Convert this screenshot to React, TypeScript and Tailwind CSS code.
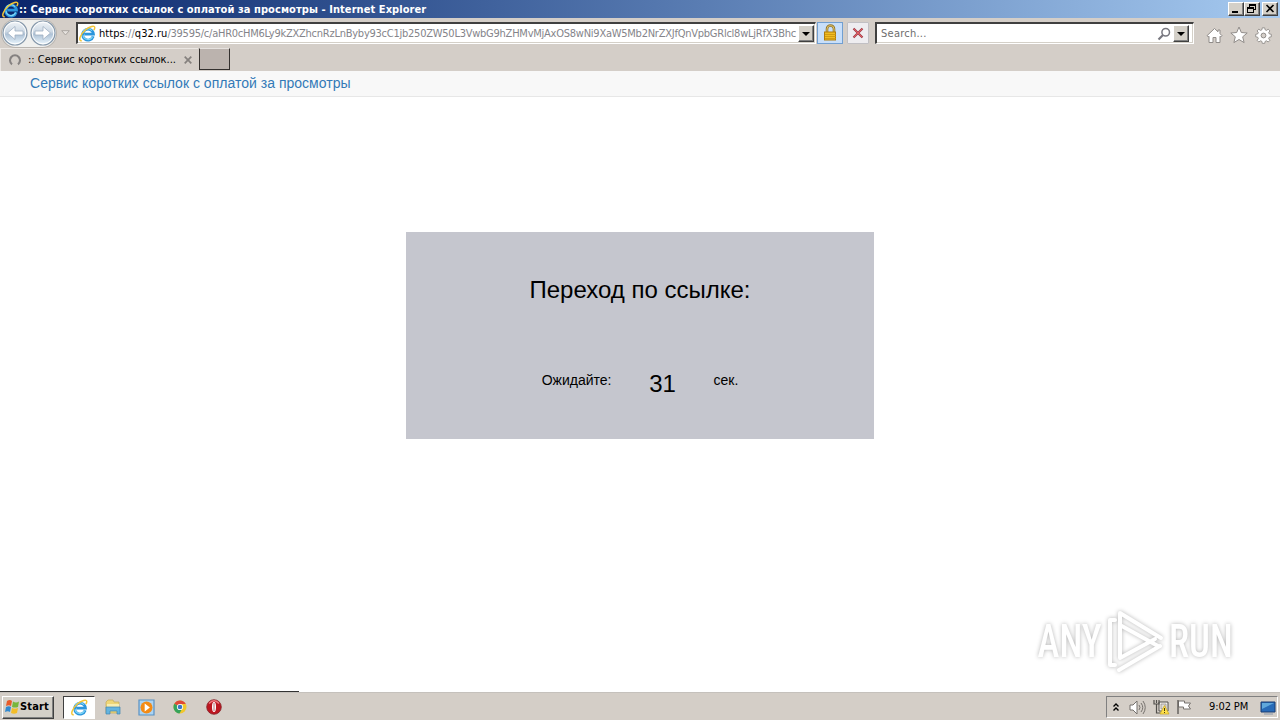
import React, { useState } from 'react';

const UI_FONT = "font-['DejaVu_Sans_Condensed','DejaVu_Sans',sans-serif] [font-stretch:condensed]";
const RAISED = 'border border-t-white border-l-white border-r-[#404040] border-b-[#404040] bg-[#d4d0c8] shadow-[inset_-1px_-1px_0_#808080]';
const SUNKEN = 'bg-white border border-t-[#404040] border-l-[#404040] border-t-2 border-l-2 border-r-white border-b-white shadow-[inset_-1px_-1px_0_#d4d0c8]';

const IeLogo: React.FC<{ size?: number }> = ({ size = 16 }) => (
    <svg width={size} height={size} viewBox="0 0 16 16" className="shrink-0">
        <path d="M13.4 10.6A5.1 5.1 0 1 1 13.6 8.500H5" fill="none" stroke="#2b95dc" strokeWidth="2.6" />
        <path d="M12.8 10.800A4.700 4.700 0 0 1 3.800 9.600M3.800 7a4.800 4.800 0 0 1 8.400-1.600" fill="none" stroke="#7fd6f7" strokeWidth="1.1" />
        <path d="M2.6 14.8C-1 15.4 1 9 6 4.7 10 1.2 15 .1 14.8 2.5c0 .9-.4 1.6-.9 2.3" fill="none" stroke="#f3c436" strokeWidth="1.4" />
    </svg>
);

const NavArrow: React.FC<{ forward?: boolean }> = ({ forward }) => (
    <svg width="26" height="26" viewBox="0 0 26 26" className="shrink-0">
        <defs>
            <linearGradient id={forward ? 'navF' : 'navB'} x1="0" y1="0" x2="0" y2="1">
                <stop offset="0" stopColor="#f2f5f8" />
                <stop offset=".45" stopColor="#ccd8e4" />
                <stop offset=".55" stopColor="#aec2d6" />
                <stop offset="1" stopColor="#edf8ff" />
            </linearGradient>
        </defs>
        <circle cx="13" cy="13" r="12" fill={forward ? 'url(#navF)' : 'url(#navB)'} stroke="#8698aa" strokeWidth="1.2" />
        <circle cx="13" cy="13" r="10.8" fill="none" stroke="#fff" strokeWidth="1" />
        <path
            d={forward ? 'M5 11h8V6.5l7.5 6.5-7.5 6.5V15H5z' : 'M21 11h-8V6.5L5.5 13l7.5 6.5V15h8z'}
            fill="#fff" stroke="#9eafc1" strokeWidth=".8"
        />
    </svg>
);

const DropButton = () => (
    <div className={`w-4 h-[17px] shrink-0 flex items-center justify-center ${RAISED}`}>
        <svg width="8" height="4" viewBox="0 0 8 4"><path d="M0 0h8L4 4z" fill="#000" /></svg>
    </div>
);

const TitleBar = () => (
    <div className="h-[18px] flex items-center pl-[2px] pr-[2px] bg-linear-to-r from-[#0a246a] to-[#a6caf0]">
        <IeLogo size={17} />
        <span className="flex-1 pt-px text-[11px] leading-[17px] font-bold text-white whitespace-nowrap tracking-[0.075px]">
            :: Сервис коротких ссылок с оплатой за просмотры - Internet Explorer
        </span>
        <div className="flex">
            <div className={`w-4 h-[14px] ${RAISED}`}>
                <svg width="14" height="12" viewBox="0 0 14 12"><path d="M3 8h6v2H3z" /></svg>
            </div>
            <div className={`w-4 h-[14px] ${RAISED}`}>
                <svg width="14" height="12" viewBox="0 0 14 12" shapeRendering="crispEdges">
                    <path d="M4 1h7v6H9V6h1V3H5v1H4zM2 4h7v6H2zm1 2v3h5V6z" fillRule="evenodd" />
                </svg>
            </div>
            <div className={`w-4 h-[14px] ml-[2px] ${RAISED}`}>
                <svg width="14" height="12" viewBox="0 0 14 12"><path d="M3.5 2l7 7M10.5 2l-7 7" stroke="#000" strokeWidth="1.6" /></svg>
            </div>
        </div>
    </div>
);

const AddressRow = () => (
    <div className="h-[30px] flex items-center pl-[2px] pr-[8px]">
        <div className="flex w-[54px] h-[27px] gap-[2px] rounded-full bg-[#f0f0ee] shadow-[0_0_0_1px_#b9b5b0]">
            <NavArrow />
            <NavArrow forward />
        </div>
        <svg width="9" height="6" viewBox="0 0 9 6" className="ml-[5px]"><path d="M.7.7h7.6L4.5 5z" fill="#e7e3df" stroke="#aaa5a0" /></svg>
        <div className={`ml-[6px] w-[740px] h-[22px] flex items-center pl-[1px] pr-[1px] ${SUNKEN}`}>
            <IeLogo size={17} />
            <div className="ml-[3px] w-[698px] whitespace-nowrap text-[11px] leading-[17px] text-[#84848a] tracking-[-0.245px]">
                <span className="tracking-[0.04px]"><span className="text-black">https</span>://<span className="text-black">q32.ru</span></span>
                /39595/c/aHR0cHM6Ly9kZXZhcnRzLnByby93cC1jb250ZW50L3VwbG9hZHMvMjAxOS8wNi9XaW5Mb2NrZXJfQnVpbGRlcl8wLjRfX3Bhc
            </div>
            <div className="ml-auto"><DropButton /></div>
        </div>
        <div className="ml-[1px] w-[26px] h-[22px] flex items-center justify-center bg-[#c8dffa] border border-[#719fd1]">
            <svg width="15" height="18" viewBox="0 0 15 18">
                <path d="M4 9V5a3.4 3.4 0 0 1 7 0v4" fill="none" stroke="#94762c" strokeWidth="2.6" />
                <path d="M4 9V5a3.4 3.4 0 0 1 7 0v4" fill="none" stroke="#ddc36b" strokeWidth="1" />
                <rect x="1.5" y="8" width="11" height="8" fill="#f1bd22" stroke="#b07c0b" />
                <path d="M2 10.5h11M2 12.5h11M2 14.5h11" stroke="#c9920f" strokeWidth=".8" />
            </svg>
        </div>
        <div className="ml-1 w-[22px] h-[22px] flex items-center justify-center bg-[#eeedf0] border border-[#c1c0c4] rounded-[1px]">
            <svg width="12" height="12" viewBox="0 0 12 12">
                <path d="M1.5 1.5l9 9M10.5 1.5l-9 9" stroke="#a23f48" strokeWidth="2.2" />
                <path d="M2 2l8 8M10 2l-8 8" stroke="#e25b62" strokeWidth="1" />
            </svg>
        </div>
        <div className={`ml-[6px] w-[319px] h-[22px] flex items-center pl-[4px] pr-[4px] ${SUNKEN}`}>
            <span className="flex-1 pt-[2px] text-[11px] text-[#6d6d6d] tracking-[0.25px]">Search...</span>
            <svg width="14" height="14" viewBox="0 0 14 14" className="mr-[2px]">
                <circle cx="8.7" cy="5.2" r="3.8" fill="#fff" stroke="#77777f" strokeWidth="1.5" />
                <path d="M6 8l-4.5 4.5" stroke="#77777f" strokeWidth="2.2" />
            </svg>
            <DropButton />
        </div>
        <div className="ml-auto flex items-center gap-[7px] pt-[4px]">
            <svg width="17" height="17" viewBox="0 0 17 17">
                <path d="M8.5 1.5L1 8.7l1.2 1.2.8-.7v6.3h4v-5h3v5h4V9.2l.8.7L16 8.7l-2-2V3h-2v1.8z" fill="#fff" stroke="#908c89" strokeWidth="1" />
            </svg>
            <svg width="18" height="18" viewBox="0 0 18 18">
                <path d="M9 1l2.3 5.5 5.9.5-4.5 3.8 1.4 5.8L9 13.5l-5.1 3.1 1.4-5.8L.8 7l5.9-.5z" fill="#fff" stroke="#908c89" strokeWidth="1" />
            </svg>
            <svg width="17" height="17" viewBox="0 0 17 17">
                <path
                    d="M7.3.8h2.4l.4 2 1.4.6 1.7-1.2 1.7 1.7-1.2 1.7.6 1.3 2 .4v2.5l-2 .4-.6 1.4 1.2 1.7-1.7 1.7-1.7-1.2-1.4.6-.4 2H7.3l-.4-2-1.4-.6L3.8 15l-1.7-1.7 1.2-1.7-.6-1.4-2-.4V7.3l2-.4.6-1.3-1.2-1.7 1.7-1.7 1.7 1.2 1.4-.6z"
                    fill="#fff" stroke="#908c89" strokeWidth=".9"
                />
                <circle cx="8.5" cy="8.5" r="2.4" fill="#d4cec8" stroke="#908c89" />
            </svg>
        </div>
    </div>
);

const TabRow = () => (
    <div className="h-[23px] flex">
        <div className="w-[198px] flex items-center pl-[7px] border-l border-t border-[#ece8e4]">
            <svg width="14" height="14" viewBox="0 0 14 14">
                <path d="M4 11.3a5 5 0 1 1 6 0" fill="none" stroke="#858180" strokeWidth="2.1" />
            </svg>
            <span className="ml-[6px] w-[149px] pt-px text-[11px] text-black whitespace-nowrap">:: Сервис коротких ссылок...</span>
            <svg width="8" height="8" viewBox="0 0 8 8" className="ml-[7px]"><path d="M.7.7l6.6 6.6M7.3.7L.7 7.3" stroke="#85817e" strokeWidth="1.7" /></svg>
        </div>
        <div className="ml-[1px] w-[31px] h-[22px] bg-[#bbb3ae] border border-t-[#e6e2df] border-l-[#33302e] border-r-[#33302e] border-b-[#33302e]" />
    </div>
);

const AnyRunMark = () => (
    <div className="absolute left-[1036px] top-[606px] w-[200px] h-[70px] flex items-center font-['Roboto','Liberation_Sans',sans-serif] font-medium text-white [filter:drop-shadow(0_0_2px_#b4b4b4)]">
        <span className="w-[68px] text-[47px] leading-[70px] pl-[2px] origin-left scale-x-[0.79]">ANY</span>
        <svg width="60" height="66" viewBox="0 0 60 66" className="shrink-0 ml-[1px]">
            <g fill="none" stroke="#fff" strokeWidth="4" strokeLinejoin="round" strokeLinecap="round">
                <path d="M15 50V5l41 25M15 17l38 21M15 50l35-19" />
                <path d="M10 12H5v45h5M14 62l41-24" />
            </g>
        </svg>
        <span className="ml-[4px] w-[64px] text-[47px] leading-[70px] origin-left scale-x-[0.785]">RUN</span>
    </div>
);

const QuickLaunch = () => (
    <div className="flex items-center">
        <div className="ml-[9px] w-[32px] h-[23px] flex items-center justify-center bg-white border border-t-[#404040] border-l-[#404040] border-r-white border-b-white">
            <IeLogo size={17} />
        </div>
        <svg width="16" height="16" viewBox="0 0 16 16" className="ml-[10px]">
            <path d="M1 3l2-2h5l1 2h5v11H1z" fill="#efd677" stroke="#c3aa59" strokeWidth=".7" />
            <path d="M2 5h12v6H2z" fill="#f7edb1" />
            <path d="M1 8h14v7h-3v-3H5v3H1z" fill="#64b4df" stroke="#4184b0" strokeWidth=".7" />
        </svg>
        <svg width="17" height="17" viewBox="0 0 17 17" className="ml-[17px]">
            <path d="M1 1h15v15H1z" fill="#acd4f3" stroke="#5991c3" strokeWidth="1.2" />
            <circle cx="8.5" cy="8.5" r="6" fill="#f38b16" />
            <path d="M6.7 4.5l5.2 4-5.2 4z" fill="#fff" />
        </svg>
        <svg width="14" height="14" viewBox="0 0 14 14" className="ml-[18px]">
            <circle cx="7" cy="7" r="6.5" fill="#f1c72b" />
            <path d="M7 7L1.3 3.8A6.5 6.5 0 0 1 12.8 4H7z" fill="#df4937" />
            <path d="M1.3 3.8A6.5 6.5 0 0 0 6.5 13.5L9 9 7 7z" fill="#36a35b" />
            <circle cx="7" cy="7" r="3.1" fill="#fff" />
            <circle cx="7" cy="7" r="2.3" fill="#3b77c4" />
        </svg>
        <svg width="16" height="16" viewBox="0 0 16 16" className="ml-[19px]">
            <circle cx="8" cy="8" r="7.3" fill="#bd1620" stroke="#84232a" strokeWidth=".8" />
            <path d="M3 4.5Q8-1 13 4.5" fill="none" stroke="#ef777d" strokeWidth="1.4" />
            <ellipse cx="8" cy="8" rx="2" ry="5" fill="#fff" />
            <path d="M8 4v8" stroke="#a4434a" strokeWidth=".8" />
        </svg>
    </div>
);

const Tray = () => (
    <div className="ml-auto w-[172px] h-[22px] flex items-center pl-[6px] border border-t-[#808080] border-l-[#808080] border-r-white border-b-white">
        <svg width="6" height="9" viewBox="0 0 6 9"><path d="M.5 3.5L3 1l2.5 2.5M.5 7.5L3 5l2.5 2.5" fill="none" stroke="#000" strokeWidth="1.4" /></svg>
        <svg width="17" height="15" viewBox="0 0 17 15" className="ml-[10px]">
            <path d="M1 5h3l4-4v13l-4-4H1z" fill="#fff" stroke="#74706c" />
            <path d="M10 5q2 2.5 0 5M12 3q3.5 4.5 0 9M14 1q4.5 6.5 0 13" fill="none" stroke="#77736f" />
        </svg>
        <svg width="17" height="16" viewBox="0 0 17 16" className="ml-[7px]">
            <path d="M6 3h9v9H6z" fill="#f4f2ef" stroke="#514f4b" />
            <path d="M8 5h5v5H8z" fill="#dedbd6" stroke="#8f8b86" strokeWidth=".7" />
            <path d="M1 1v4h5V1M3.5 1v3M3.5 5v9h4" fill="none" stroke="#514f4b" strokeWidth="1.2" />
            <path d="M11.5 6.5L16 15H7z" fill="#ffe14c" stroke="#c9a51b" strokeWidth=".7" />
            <path d="M11.5 9v3M11.5 13v1" stroke="#443a10" />
        </svg>
        <svg width="17" height="16" viewBox="0 0 17 16" className="ml-[6px]">
            <path d="M2.5 2h6v2h6l-2 3 2 3h-7V8h-5z" fill="#fff" stroke="#77736f" />
            <path d="M2 1v14" stroke="#66625f" strokeWidth="1.5" />
        </svg>
        <span className="ml-[16px] w-[44px] pt-px text-[11px] text-black whitespace-nowrap tracking-[-0.1px]">9:02 PM</span>
        <svg width="16" height="15" viewBox="0 0 16 15" className="ml-[7px] shrink-0">
            <path d="M1 2h14v10H1z" fill="#286bb8" stroke="#193d73" />
            <path d="M2 3h12L2 9z" fill="#60a8dc" />
            <path d="M4 14h9" stroke="#a2a9b3" strokeWidth="1.5" />
        </svg>
    </div>
);

const Taskbar = () => (
    <div className="h-[28px] shrink-0 flex items-center pl-[2px] pr-[2px] pt-px bg-[#d4cec7] border-t border-[#c5c1bc]">
        <div className={`w-[52px] h-[23px] flex items-center pl-[1px] ${RAISED}`}>
            <svg width="17" height="16" viewBox="0 0 17 16" className="shrink-0">
                <path d="M3 2q3-2 5 0L7 7Q5 5.5 2 7z" fill="#e85b2a" />
                <path d="M9 2.5q3 2 6 0L14 8q-3 1-6 0z" fill="#78b63c" />
                <path d="M2 8q3-1.5 5 0l-1 5Q4 11.5 1 13z" fill="#3189d0" />
                <path d="M8 9q3 1.5 6 0l-1 5q-3 1.5-6 0z" fill="#f3bd29" />
            </svg>
            <span className="pt-px -ml-px text-[11px] font-bold text-black tracking-[0.15px]">Start</span>
        </div>
        <QuickLaunch />
        <Tray />
    </div>
);

export default function App() {
    const [seconds] = useState(31);

    return (
        <div className={`relative w-[1280px] h-[720px] overflow-hidden flex flex-col bg-white ${UI_FONT}`}>
            {/* Browser chrome */}
            <div className="h-[71px] shrink-0 bg-[#d4cec8]">
                <TitleBar />
                <AddressRow />
                <TabRow />
            </div>

            {/* Page */}
            <div className="flex-1 min-h-0 flex flex-col font-['Liberation_Sans',Arial,sans-serif] text-black">
                <div className="h-[26px] shrink-0 pl-[30px] bg-[#f8f8f8] border-b border-[#e7e7e7]">
                    <a className="text-[14px] leading-[25px] tracking-[0.015px] text-[#337ab7]">Сервис коротких ссылок с оплатой за просмотры</a>
                </div>
                <div className="mt-[135px] mx-auto w-[468px] h-[207px] bg-[#c5c6ce] pt-[41px] text-center">
                    <h1 className="text-[24px] leading-[34px]">Переход по ссылке:</h1>
                    <div className="mt-[56px] flex justify-center items-start">
                        <span className="text-[14px] leading-[34px]">Ожидайте:</span>
                        <span className="w-[102px] text-[24px] leading-[42px]">{seconds}</span>
                        <span className="text-[14px] leading-[34px]">сек.</span>
                    </div>
                </div>
                <div className="mt-auto w-[299px] h-px bg-[#333]" />
            </div>

            <Taskbar />
            <AnyRunMark />
        </div>
    );
}
